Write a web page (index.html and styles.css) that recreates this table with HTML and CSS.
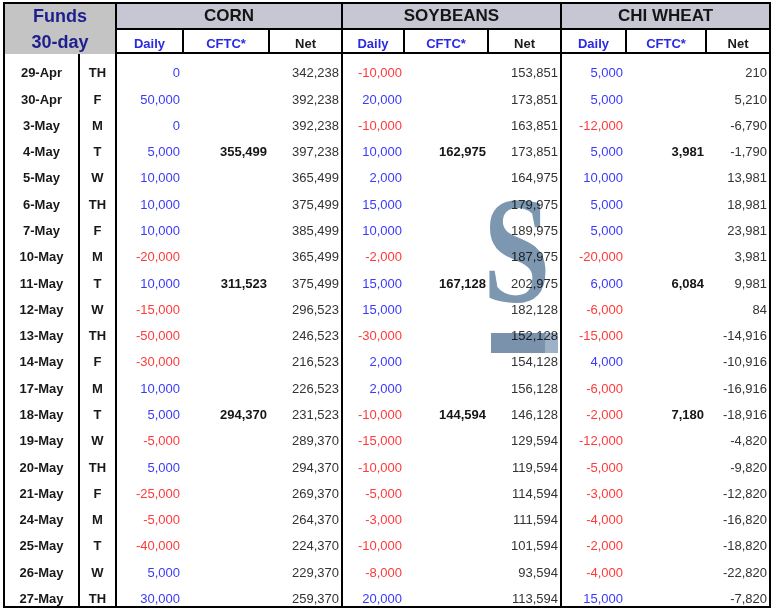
FILE: index.html
```html
<!DOCTYPE html>
<html>
<head>
<meta charset="utf-8">
<link rel="stylesheet" href="styles.css">
</head>
<body>
<div class="sheet">
  <div class="funds"><span>Funds</span><span>30-day</span></div>
  <div class="grp g1">CORN</div>
  <div class="grp g2">SOYBEANS</div>
  <div class="grp g3 last">CHI WHEAT</div>

  <div class="sub blue">Daily</div><div class="sub blue">CFTC*</div><div class="sub">Net</div>
  <div class="sub blue">Daily</div><div class="sub blue">CFTC*</div><div class="sub">Net</div>
  <div class="sub blue">Daily</div><div class="sub blue">CFTC*</div><div class="sub last">Net</div>

  <div class="row"><div class="dt">29-Apr</div><div class="dy">TH</div><div class="d p">0</div><div class="f"></div><div class="n e">342,238</div><div class="d s m">-10,000</div><div class="f"></div><div class="n e">153,851</div><div class="d p">5,000</div><div class="f"></div><div class="n">210</div></div>
  <div class="row"><div class="dt">30-Apr</div><div class="dy">F</div><div class="d p">50,000</div><div class="f"></div><div class="n e">392,238</div><div class="d s p">20,000</div><div class="f"></div><div class="n e">173,851</div><div class="d p">5,000</div><div class="f"></div><div class="n">5,210</div></div>
  <div class="row"><div class="dt">3-May</div><div class="dy">M</div><div class="d p">0</div><div class="f"></div><div class="n e">392,238</div><div class="d s m">-10,000</div><div class="f"></div><div class="n e">163,851</div><div class="d m">-12,000</div><div class="f"></div><div class="n">-6,790</div></div>
  <div class="row"><div class="dt">4-May</div><div class="dy">T</div><div class="d p">5,000</div><div class="f">355,499</div><div class="n e">397,238</div><div class="d s p">10,000</div><div class="f">162,975</div><div class="n e">173,851</div><div class="d p">5,000</div><div class="f">3,981</div><div class="n">-1,790</div></div>
  <div class="row"><div class="dt">5-May</div><div class="dy">W</div><div class="d p">10,000</div><div class="f"></div><div class="n e">365,499</div><div class="d s p">2,000</div><div class="f"></div><div class="n e">164,975</div><div class="d p">10,000</div><div class="f"></div><div class="n">13,981</div></div>
  <div class="row"><div class="dt">6-May</div><div class="dy">TH</div><div class="d p">10,000</div><div class="f"></div><div class="n e">375,499</div><div class="d s p">15,000</div><div class="f"></div><div class="n e">179,975</div><div class="d p">5,000</div><div class="f"></div><div class="n">18,981</div></div>
  <div class="row"><div class="dt">7-May</div><div class="dy">F</div><div class="d p">10,000</div><div class="f"></div><div class="n e">385,499</div><div class="d s p">10,000</div><div class="f"></div><div class="n e">189,975</div><div class="d p">5,000</div><div class="f"></div><div class="n">23,981</div></div>
  <div class="row"><div class="dt">10-May</div><div class="dy">M</div><div class="d m">-20,000</div><div class="f"></div><div class="n e">365,499</div><div class="d s m">-2,000</div><div class="f"></div><div class="n e">187,975</div><div class="d m">-20,000</div><div class="f"></div><div class="n">3,981</div></div>
  <div class="row"><div class="dt">11-May</div><div class="dy">T</div><div class="d p">10,000</div><div class="f">311,523</div><div class="n e">375,499</div><div class="d s p">15,000</div><div class="f">167,128</div><div class="n e">202,975</div><div class="d p">6,000</div><div class="f">6,084</div><div class="n">9,981</div></div>
  <div class="row"><div class="dt">12-May</div><div class="dy">W</div><div class="d m">-15,000</div><div class="f"></div><div class="n e">296,523</div><div class="d s p">15,000</div><div class="f"></div><div class="n e">182,128</div><div class="d m">-6,000</div><div class="f"></div><div class="n">84</div></div>
  <div class="row"><div class="dt">13-May</div><div class="dy">TH</div><div class="d m">-50,000</div><div class="f"></div><div class="n e">246,523</div><div class="d s m">-30,000</div><div class="f"></div><div class="n e">152,128</div><div class="d m">-15,000</div><div class="f"></div><div class="n">-14,916</div></div>
  <div class="row"><div class="dt">14-May</div><div class="dy">F</div><div class="d m">-30,000</div><div class="f"></div><div class="n e">216,523</div><div class="d s p">2,000</div><div class="f"></div><div class="n e">154,128</div><div class="d p">4,000</div><div class="f"></div><div class="n">-10,916</div></div>
  <div class="row"><div class="dt">17-May</div><div class="dy">M</div><div class="d p">10,000</div><div class="f"></div><div class="n e">226,523</div><div class="d s p">2,000</div><div class="f"></div><div class="n e">156,128</div><div class="d m">-6,000</div><div class="f"></div><div class="n">-16,916</div></div>
  <div class="row"><div class="dt">18-May</div><div class="dy">T</div><div class="d p">5,000</div><div class="f">294,370</div><div class="n e">231,523</div><div class="d s m">-10,000</div><div class="f">144,594</div><div class="n e">146,128</div><div class="d m">-2,000</div><div class="f">7,180</div><div class="n">-18,916</div></div>
  <div class="row"><div class="dt">19-May</div><div class="dy">W</div><div class="d m">-5,000</div><div class="f"></div><div class="n e">289,370</div><div class="d s m">-15,000</div><div class="f"></div><div class="n e">129,594</div><div class="d m">-12,000</div><div class="f"></div><div class="n">-4,820</div></div>
  <div class="row"><div class="dt">20-May</div><div class="dy">TH</div><div class="d p">5,000</div><div class="f"></div><div class="n e">294,370</div><div class="d s m">-10,000</div><div class="f"></div><div class="n e">119,594</div><div class="d m">-5,000</div><div class="f"></div><div class="n">-9,820</div></div>
  <div class="row"><div class="dt">21-May</div><div class="dy">F</div><div class="d m">-25,000</div><div class="f"></div><div class="n e">269,370</div><div class="d s m">-5,000</div><div class="f"></div><div class="n e">114,594</div><div class="d m">-3,000</div><div class="f"></div><div class="n">-12,820</div></div>
  <div class="row"><div class="dt">24-May</div><div class="dy">M</div><div class="d m">-5,000</div><div class="f"></div><div class="n e">264,370</div><div class="d s m">-3,000</div><div class="f"></div><div class="n e">111,594</div><div class="d m">-4,000</div><div class="f"></div><div class="n">-16,820</div></div>
  <div class="row"><div class="dt">25-May</div><div class="dy">T</div><div class="d m">-40,000</div><div class="f"></div><div class="n e">224,370</div><div class="d s m">-10,000</div><div class="f"></div><div class="n e">101,594</div><div class="d m">-2,000</div><div class="f"></div><div class="n">-18,820</div></div>
  <div class="row"><div class="dt">26-May</div><div class="dy">W</div><div class="d p">5,000</div><div class="f"></div><div class="n e">229,370</div><div class="d s m">-8,000</div><div class="f"></div><div class="n e">93,594</div><div class="d m">-4,000</div><div class="f"></div><div class="n">-22,820</div></div>
  <div class="row"><div class="dt">27-May</div><div class="dy">TH</div><div class="d p">30,000</div><div class="f"></div><div class="n e">259,370</div><div class="d s p">20,000</div><div class="f"></div><div class="n e">113,594</div><div class="d p">15,000</div><div class="f"></div><div class="n">-7,820</div></div>

  <div class="mark" aria-hidden="true"><span class="mark-s">S</span></div>
  <div class="mark-bar" aria-hidden="true"></div>
</div>
</body>
</html>
```

FILE: styles.css
```css
html, body {
  margin: 0;
  padding: 0;
  background: #fff;
}

body {
  font-family: "Liberation Sans", Arial, sans-serif;
  color: #222;
}

.sheet {
  position: relative;
  display: grid;
  grid-template-columns: 75px 37px 67px 86px 73px 62px 84px 73px 65px 80px 62px;
  grid-template-rows: 26px 24px repeat(21, 26.286px);
  width: max-content;
  margin: 2px 0 0 3px;
  border: 2px solid #000;
  box-shadow: 0 2px 0 #d6d6d6;
}

.sheet > div,
.row > div {
  box-sizing: border-box;
}

.funds {
  grid-column: 1 / 3;
  grid-row: 1 / 3;
  background: #c4c4c4;
  border-right: 2px solid #000;
  display: flex;
  flex-direction: column;
  justify-content: center;
  align-items: center;
  font-size: 18px;
  font-weight: bold;
  line-height: 26.5px;
  color: #1e1e8e;
}

.grp {
  grid-row: 1;
  grid-column: span 3;
  background: #c7c7d3;
  border-right: 2px solid #000;
  border-bottom: 2px solid #000;
  display: flex;
  align-items: center;
  justify-content: center;
  font-size: 17px;
  font-weight: bold;
  color: #151515;
}

.grp.last {
  border-right: 0;
}

.sub {
  grid-row: 2;
  border-right: 2px solid #000;
  border-bottom: 2px solid #000;
  display: flex;
  align-items: flex-end;
  justify-content: center;
  font-size: 13px;
  font-weight: bold;
  line-height: 15px;
  padding-bottom: 1px;
  color: #1c1c1c;
}

.sub.blue {
  color: #2a2ae2;
}

.sub.last {
  border-right: 0;
}

.row {
  display: contents;
}

.row > div {
  display: flex;
  align-items: flex-end;
  justify-content: flex-end;
  font-size: 13px;
  line-height: 15px;
  white-space: nowrap;
  position: relative;
  z-index: 1;
}

.row > .dt,
.row > .dy {
  justify-content: center;
  font-weight: bold;
  color: #181818;
  border-right: 2px solid #000;
}

.row > .d {
  padding-right: 4px;
}

.row > .d.s {
  padding-right: 3px;
}

.row > .f {
  padding-right: 3px;
  font-weight: bold;
  color: #161616;
}

.row > .n {
  padding-right: 2px;
  color: #333;
}

.row > .n.e {
  border-right: 2px solid #000;
}

.p {
  color: #3a3afa;
}

.m {
  color: #ff3a3a;
}

.mark {
  position: absolute;
  left: 478px;
  top: 171px;
  z-index: 2;
  pointer-events: none;
  mix-blend-mode: multiply;
}

.mark-s {
  display: block;
  font-family: "Liberation Serif", "Times New Roman", serif;
  font-weight: bold;
  font-size: 152px;
  line-height: 152px;
  color: #7d97b1;
  transform: scaleX(0.8);
  transform-origin: left top;
}

.mark-bar {
  position: absolute;
  left: 486px;
  top: 329px;
  width: 67px;
  height: 20px;
  z-index: 2;
  pointer-events: none;
  mix-blend-mode: multiply;
  background: linear-gradient(to right, #7a92ac 0, #7a92ac 80%, #9db1c7 80%, #9db1c7 100%);
}
```
